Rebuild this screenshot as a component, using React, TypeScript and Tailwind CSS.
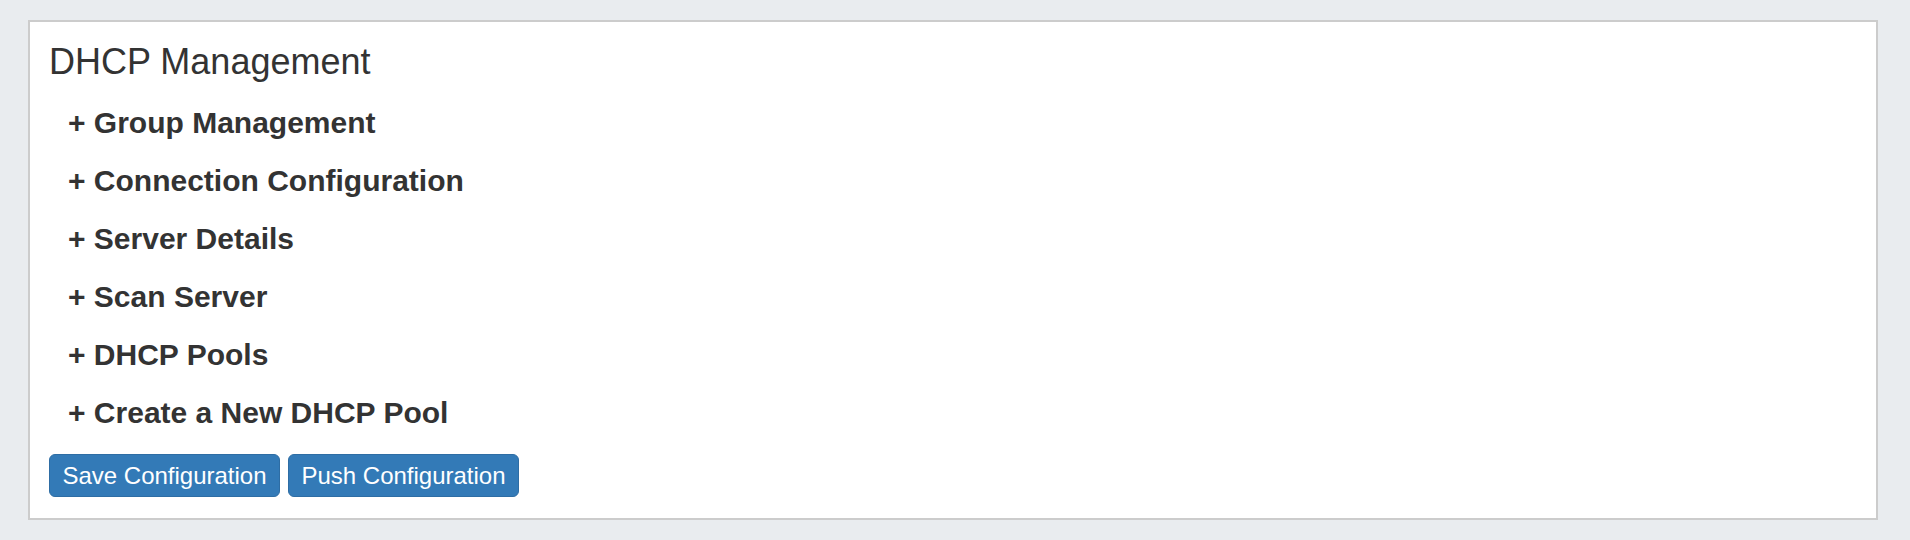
import React from "react";

const sections = [
  "Group Management",
  "Connection Configuration",
  "Server Details",
  "Scan Server",
  "DHCP Pools",
  "Create a New DHCP Pool",
];

export default function App() {
  return (
    <div
      className="min-h-[540px] bg-[#e9ecef] pt-[20px] pl-[28px]"
      style={{ fontFamily: '"Liberation Sans", Arial, Helvetica, sans-serif' }}
    >
      <div className="w-[1850px] h-[500px] bg-white border-2 border-[#cccccc] pt-[20px] px-[17px] text-[#333333]">
        <h4 className="pl-[2px] text-[36px] leading-[40px] font-normal">
          DHCP Management
        </h4>
        <div className="mt-[12px] pl-[21px]">
          {sections.map((name) => (
            <div
              key={name}
              className="h-[58px] text-[30px] leading-[58px] font-bold cursor-pointer"
            >
              + {name}
            </div>
          ))}
        </div>
        <div className="mt-[12px] pl-[2px] flex gap-[8px]">
          <button className="w-[231px] h-[43px] bg-[#337ab7] border border-[#2e6da4] rounded-[6px] text-white text-[24px] leading-none">
            Save Configuration
          </button>
          <button className="w-[231px] h-[43px] bg-[#337ab7] border border-[#2e6da4] rounded-[6px] text-white text-[24px] leading-none">
            Push Configuration
          </button>
        </div>
      </div>
    </div>
  );
}
